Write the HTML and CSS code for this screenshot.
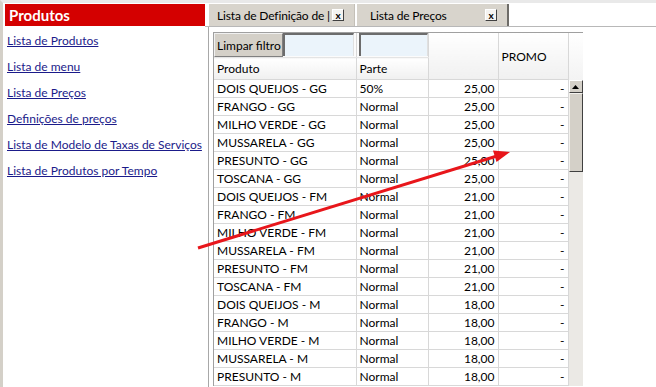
FILE: index.html
```html
<!DOCTYPE html>
<html lang="pt">
<head>
  <meta charset="UTF-8" />
  <title>Produtos</title>
  <link rel="stylesheet" href="styles.css">
</head>
<body>
  <div class="page">
    <!-- Menu lateral -->
    <aside class="sidebar">
      <div class="side-title">Produtos</div>
      <ul class="side-links">
        <li><a href="#">Lista de Produtos</a></li>
        <li><a href="#">Lista de menu</a></li>
        <li><a href="#">Lista de Preços</a></li>
        <li><a href="#">Definições de preços</a></li>
        <li><a href="#">Lista de Modelo de Taxas de Serviços</a></li>
        <li><a href="#">Lista de Produtos por Tempo</a></li>
      </ul>
    </aside>

    <main class="workspace">
      <div class="tabs">
        <div class="tab">
          <span class="tab-label">Lista de Definição de |</span>
          <span class="tab-close">x</span>
        </div>
        <div class="tab tab-active">
          <span class="tab-label">Lista de Preços</span>
          <span class="tab-close">x</span>
        </div>
      </div>

      <div class="panel">
        <div class="grid">
          <table class="grid-table">
            <colgroup>
              <col class="col-prod">
              <col class="col-parte">
              <col class="col-preco">
              <col class="col-promo">
            </colgroup>
            <thead>
              <tr class="filter-row">
                <th class="filter-cell">
                  <div class="filter-wrap">
                    <button class="btn-clear">Limpar filtro</button>
                    <span class="filter-input"></span>
                  </div>
                </th>
                <th class="filter-cell">
                  <div class="filter-wrap filter-pad">
                    <span class="filter-input"></span>
                  </div>
                </th>
                <th class="head-cell" rowspan="2"></th>
                <th class="head-cell" rowspan="2">PROMO</th>
              </tr>
              <tr class="title-row">
                <th class="head-cell">Produto</th>
                <th class="head-cell">Parte</th>
              </tr>
            </thead>
            <tbody>
              <tr><td>DOIS QUEIJOS - GG</td><td>50%</td><td class="num">25,00</td><td class="num">-</td></tr>
              <tr><td>FRANGO - GG</td><td>Normal</td><td class="num">25,00</td><td class="num">-</td></tr>
              <tr><td>MILHO VERDE - GG</td><td>Normal</td><td class="num">25,00</td><td class="num">-</td></tr>
              <tr><td>MUSSARELA - GG</td><td>Normal</td><td class="num">25,00</td><td class="num">-</td></tr>
              <tr><td>PRESUNTO - GG</td><td>Normal</td><td class="num">25,00</td><td class="num">-</td></tr>
              <tr><td>TOSCANA - GG</td><td>Normal</td><td class="num">25,00</td><td class="num">-</td></tr>
              <tr><td>DOIS QUEIJOS - FM</td><td>Normal</td><td class="num">21,00</td><td class="num">-</td></tr>
              <tr><td>FRANGO - FM</td><td>Normal</td><td class="num">21,00</td><td class="num">-</td></tr>
              <tr><td>MILHO VERDE - FM</td><td>Normal</td><td class="num">21,00</td><td class="num">-</td></tr>
              <tr><td>MUSSARELA - FM</td><td>Normal</td><td class="num">21,00</td><td class="num">-</td></tr>
              <tr><td>PRESUNTO - FM</td><td>Normal</td><td class="num">21,00</td><td class="num">-</td></tr>
              <tr><td>TOSCANA - FM</td><td>Normal</td><td class="num">21,00</td><td class="num">-</td></tr>
              <tr><td>DOIS QUEIJOS - M</td><td>Normal</td><td class="num">18,00</td><td class="num">-</td></tr>
              <tr><td>FRANGO - M</td><td>Normal</td><td class="num">18,00</td><td class="num">-</td></tr>
              <tr><td>MILHO VERDE - M</td><td>Normal</td><td class="num">18,00</td><td class="num">-</td></tr>
              <tr><td>MUSSARELA - M</td><td>Normal</td><td class="num">18,00</td><td class="num">-</td></tr>
              <tr><td>PRESUNTO - M</td><td>Normal</td><td class="num">18,00</td><td class="num">-</td></tr>
            </tbody>
          </table>

          <div class="scrollbar">
            <div class="scroll-head"></div>
            <div class="scroll-btn">
              <svg width="7" height="4" viewBox="0 0 7 4"><polygon points="0,4 7,4 3.5,0" fill="#000"/></svg>
            </div>
            <div class="scroll-thumb"></div>
            <div class="scroll-track"></div>
          </div>
        </div>
      </div>
    </main>

    <!-- seta vermelha por cima da tabela -->
    <svg class="arrow" width="656" height="387" viewBox="0 0 656 387">
      <line x1="198" y1="248" x2="497" y2="156" stroke="#e8161b" stroke-width="3"/>
      <polygon points="510,152 496.5,162 493,150.5" fill="#e8161b"/>
    </svg>
  </div>
</body>
</html>
```

FILE: styles.css
```css
body {
  margin: 0;
  padding: 0;
  font-family: Lato, "Liberation Sans", sans-serif;
  font-size: 12px;
  color: #000;
  background: #fff;
}

.page {
  position: relative;
  display: flex;
  height: 387px;
  overflow: hidden;
  border-left: 3px solid #d4d0c8;
  border-top: 3px solid #e9e9e9;
  box-sizing: border-box;
}

/* sidebar */
.sidebar {
  width: 202px;
  flex-shrink: 0;
}

.side-title {
  margin: 1px 0 0 2px;
  height: 22px;
  line-height: 22px;
  padding-left: 4px;
  background: #d40000;
  color: #fff;
  font-size: 15px;
  font-weight: bold;
}

.side-links {
  list-style: none;
  margin: 0;
  padding: 4px 0 0 4px;
}

.side-links li {
  height: 26px;
  line-height: 22px;
}

.side-links a {
  color: #1b1b8a;
  text-decoration: underline;
  white-space: nowrap;
}

/* tabs */
.workspace {
  flex: 1;
  display: flex;
  flex-direction: column;
}

.tabs {
  display: flex;
  gap: 2px;
  height: 23px;
  padding-left: 4px;
  border-bottom: 1px solid #b8b8b8;
}

.tab {
  display: flex;
  align-items: center;
  justify-content: space-between;
  gap: 1px;
  margin-top: 1px;
  padding: 0 10px 0 8px;
  background: #d8d4cc;
  border-right: 1px solid #c4c0b8;
  box-sizing: border-box;
  width: 146px;
}

.tab-active {
  width: 152px;
  padding-left: 13px;
  border-right: 2px solid #6e6c68;
}

.tab-label {
  white-space: nowrap;
  letter-spacing: -0.15px;
}

.tab-close {
  display: inline-block;
  width: 12px;
  height: 12px;
  line-height: 10px;
  text-align: center;
  font-size: 10px;
  font-weight: bold;
  background: #f4f3f0;
  border: 1px solid;
  border-color: #fff #404040 #404040 #fff;
  box-sizing: border-box;
  flex-shrink: 0;
}

/* grid */
.panel {
  flex: 1;
  border-left: 1px solid #a8a8a8;
  margin-left: 3px;
  padding: 5px 0 0 4px;
}

.grid {
  display: flex;
  width: 369px;
  border-top: 1px solid #a0a0a0;
  border-left: 1px solid #a0a0a0;
}

.grid-table {
  border-collapse: collapse;
  table-layout: fixed;
  width: 354px;
}

.col-prod { width: 142px; }
.col-parte { width: 72px; }
.col-preco { width: 70px; }
.col-promo { width: 70px; }

.grid-table th,
.grid-table td {
  border-right: 1px solid #d8d8d8;
  border-bottom: 1px solid #d8d8d8;
  padding: 0 3px;
  white-space: nowrap;
  overflow: hidden;
  font-weight: normal;
  text-align: left;
}

.grid-table td {
  height: 17px;
  line-height: 17px;
}

.grid-table td.num {
  text-align: right;
}

.filter-row {
  height: 24px;
}

.grid-table th.filter-cell {
  padding: 0;
  background: #fbfbfb;
  border-bottom: 1px solid #e4e4e4;
}

.filter-wrap {
  display: flex;
  height: 24px;
}

.filter-pad {
  padding-left: 2px;
}

.btn-clear {
  width: 69px;
  height: 24px;
  padding: 0 0 0 2px;
  margin: 0;
  font-family: inherit;
  font-size: 12px;
  text-align: left;
  white-space: nowrap;
  background: #d4d0c8;
  border: 1px solid;
  border-color: #f0f0f0 #808080 #808080 #f0f0f0;
  box-sizing: border-box;
}

.filter-input {
  width: 71px;
  height: 23px;
  background: #ebf4fb;
  border-top: 2px solid #6c6c6c;
  border-left: 2px solid #6c6c6c;
  border-right: 1px solid #e0e0e0;
  box-sizing: border-box;
}

.grid-table th.head-cell {
  background: linear-gradient(#ffffff, #f0f0f0);
  vertical-align: middle;
}

.title-row th {
  height: 21px;
  line-height: 21px;
}

/* scrollbar */
.scrollbar {
  width: 14px;
  display: flex;
  flex-direction: column;
}

.scroll-head {
  height: 47px;
  background: linear-gradient(#ffffff, #f3f3f3);
}

.scroll-btn {
  height: 13px;
  display: flex;
  align-items: center;
  justify-content: center;
  background: #d4d0c8;
  border: 1px solid;
  border-color: #ffffff #404040 #404040 #ffffff;
  box-sizing: border-box;
}

.scroll-thumb {
  height: 79px;
  background: #d4d0c8;
  border: 1px solid;
  border-color: #f4f2ee #404040 #404040 #f4f2ee;
  box-sizing: border-box;
}

.scroll-track {
  flex: 1;
  background: #ebe9e5;
}

.arrow {
  position: absolute;
  left: -3px;
  top: -3px;
  pointer-events: none;
}
```
